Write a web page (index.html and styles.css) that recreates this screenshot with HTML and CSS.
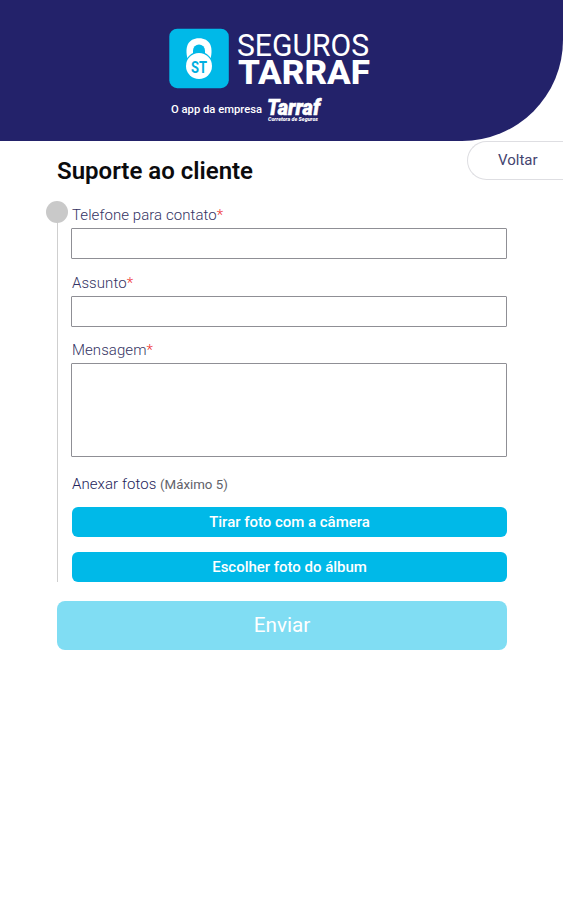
FILE: index.html
```html
<!DOCTYPE html>
<html lang="pt-BR">
<head>
<meta charset="utf-8">
<title>Suporte ao cliente</title>
<link rel="stylesheet" href="styles.css">
</head>
<body>
<header class="header">
  <svg class="logo" width="204" height="100" viewBox="169 28 204 100" role="img" aria-label="Seguros Tarraf">
    <rect x="169.3" y="28.7" width="59.5" height="59.5" rx="8" fill="#00b9e8"/>
    <path d="M187.500 58.500C184.500 47 188 38.200 199 38.200s14.500 8.800 11.500 20.300Z" fill="#fff"/>
    <path d="M193 58V50.500a6 6 0 0 1 12 0V58Z" fill="#00b9e8"/>
    <circle cx="199" cy="66" r="14.200" fill="#00b9e8"/>
    <circle cx="199" cy="66" r="13" fill="#fff"/>
    <text class="logo-mark" x="191" y="72.500" textLength="16" lengthAdjust="spacingAndGlyphs">ST</text>
    <text class="logo-light" x="237" y="56" textLength="132" lengthAdjust="spacingAndGlyphs">SEGUROS</text>
    <text class="logo-bold" x="238" y="84" textLength="132" lengthAdjust="spacingAndGlyphs">TARRAF</text>
    <text class="logo-tag" x="171" y="113" textLength="91" lengthAdjust="spacingAndGlyphs">O app da empresa</text>
    <text class="logo-company" x="267" y="114.500" textLength="53" lengthAdjust="spacingAndGlyphs">Tarraf</text>
    <text class="logo-small" x="268" y="121" textLength="50" lengthAdjust="spacingAndGlyphs">Corretora de Seguros</text>
  </svg>
</header>
<main>
  <div class="topbar">
    <h1>Suporte ao cliente</h1>
    <a class="back">Voltar</a>
  </div>
  <form class="form">
    <div class="steps">
      <label class="label" for="tel">Telefone para contato<span class="req">*</span></label>
      <input class="field" id="tel">
      <label class="label" for="subject">Assunto<span class="req">*</span></label>
      <input class="field" id="subject">
      <label class="label" for="msg">Mensagem<span class="req">*</span></label>
      <textarea class="field area" id="msg"></textarea>
      <p class="attach">Anexar fotos <small>(Máximo 5)</small></p>
      <button class="photo" type="button">Tirar foto com a câmera</button>
      <button class="photo" type="button">Escolher foto do álbum</button>
    </div>
    <button class="send" type="button">Enviar</button>
  </form>
</main>
</body>
</html>
```

FILE: styles.css
```css
* { box-sizing: border-box; }
body { margin: 0; background: #fff; font-family: Roboto, "Liberation Sans", sans-serif; color: #24236a; }
.header { height: 141px; padding: 28px 0 0 169px; background: #23226a; border-bottom-right-radius: 101px; }
.logo { display: block; overflow: visible; }
.logo text { fill: #fff; }
.logo .logo-mark { fill: #00aee0; font-size: 17px; font-weight: 700; }
.logo-light { font-size: 30.500px; font-weight: 400; }
.logo-bold { font-size: 34px; font-weight: 800; }
.logo-tag { font-size: 11.500px; font-weight: 500; }
.logo-company { font-size: 22px; font-weight: 900; font-style: italic; stroke: #fff; stroke-width: 0.500px; }
.logo-small { font-size: 6px; font-weight: 900; font-style: italic; }
.topbar { display: flex; justify-content: space-between; align-items: flex-start; height: 60px; padding-left: 57px; }
h1 { margin: 16px 0 0; font-size: 24px; line-height: 28px; font-weight: 600; color: #0b0b0d; letter-spacing: 0; }
.back { width: 96px; height: 39px; padding-left: 30px; border: 1px solid #dedee2; border-right: 0; border-radius: 20px 0 0 20px; font-size: 15px; line-height: 37px; color: #45446f; }
.form { width: 450px; margin-left: 57px; }
.steps { position: relative; display: flex; flex-direction: column; height: 381px; padding: 4px 0 0 14px; }
.steps::before { content: ""; position: absolute; left: 0; top: 11px; bottom: 0; width: 1px; background: #cfcfcf; }
.steps::after { content: ""; position: absolute; left: -11px; top: 0; width: 22px; height: 22px; border-radius: 50%; background: #c9c9c9; }
.label { height: 23.200px; flex: none; padding-left: 1px; font-size: 15px; line-height: 20px; font-weight: 300; letter-spacing: 0.070px; color: #343363; }
.req { color: #ee3030; }
.field { width: 436px; height: 31px; margin: 0 0 13.400px; padding: 0; border: 1px solid #8f8f95; border-radius: 1px; background: #fff; outline: 0; flex: none; }
.area { height: 94px; margin-bottom: 16.800px; resize: none; }
.attach { margin: 0 0 12px; padding-left: 1px; font-size: 15px; line-height: 20px; font-weight: 300; letter-spacing: 0.070px; color: #24235a; }
.attach small { font-size: 13.300px; font-weight: 400; letter-spacing: -0.020px; color: #62626a; }
.photo { height: 30px; flex: none; margin: 0 0 15px 1px; padding: 0; border: 0; border-radius: 6px; background: #00b9e8; color: #fff; font: 500 15px/30px Roboto, sans-serif; letter-spacing: -0.020px; }
.photo:last-child { margin-bottom: 0; }
.send { display: block; width: 450px; height: 49px; margin-top: 19px; padding: 0; border: 0; border-radius: 8px; background: #80ddf3; color: #fff; font: 400 20.700px/49px Roboto, sans-serif; }
```
